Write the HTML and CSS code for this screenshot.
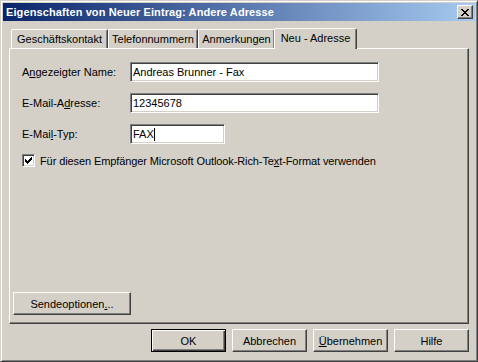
FILE: index.html
```html
<!DOCTYPE html>
<html lang="de">
<head>
    <meta charset="UTF-8">
    <link rel="stylesheet" href="styles.css">
</head>
<body>
    <div class="window">
        <div class="titlebar">
            <span class="title">Eigenschaften von Neuer Eintrag: Andere Adresse</span>
            <span class="close">
                <svg width="8" height="7" viewBox="0 0 8 7"><path d="M0 0h2v1h1v1h2v-1h1v-1h2v1h-1v1h-1v1h-1v1h1v1h1v1h1v1h-2v-1h-1v-1h-2v1h-1v1h-2v-1h1v-1h1v-1h1v-1h-1v-1h-1v-1h-1z" fill="#000"/></svg>
            </span>
        </div>

        <div class="tabs">
            <div class="tab t-business">Geschäftskontakt</div>
            <div class="tab t-phone">Telefonnummern</div>
            <div class="tab t-notes">Anmerkungen</div>
            <div class="tab active">Neu - Adresse</div>
        </div>

        <div class="panel">
            <div class="fields">
                <div class="row">
                    <label class="label">A<u>n</u>gezeigter Name:</label>
                    <div class="field wide">Andreas Brunner - Fax</div>
                </div>
                <div class="row">
                    <label class="label">E-Mail-A<u>d</u>resse:</label>
                    <div class="field wide">12345678</div>
                </div>
                <div class="row">
                    <label class="label">E-Mai<u>l</u>-Typ:</label>
                    <div class="field short">FAX<span class="caret"></span></div>
                </div>
                <div class="check-row">
                    <span class="checkbox">
                        <svg width="7" height="7" viewBox="0 0 7 7"><path d="M6 0h1v3h-1v1h-1v1h-1v1h-1v1h-1v-1h-1v-1h-1v-3h1v1h1v1h1v-1h1v-1h1v-1h1z" fill="#000"/></svg>
                    </span>
                    <span class="check-text">Für diesen Empfänger Microsoft Outlook-Rich-Te<u>x</u>t-Format verwenden</span>
                </div>
            </div>
            <button class="btn send">Sendeoptionen<u>.</u>..</button>
        </div>

        <div class="buttons">
            <button class="btn default">OK</button>
            <button class="btn">Abbrechen</button>
            <button class="btn"><u>Ü</u>bernehmen</button>
            <button class="btn">Hilfe</button>
        </div>
    </div>
</body>
</html>
```

FILE: styles.css
```css
body {
    margin: 0;
    font-family: 'Liberation Sans', Arial, sans-serif;
    font-size: 11px;
    color: #000;
    background-color: #d4d0c8;
}

.window {
    width: 478px;
    height: 362px;
    box-sizing: border-box;
    border: 1px solid;
    border-color: #d4d0c8 #404040 #404040 #d4d0c8;
    box-shadow: inset 1px 1px #fff, inset -1px -1px #808080;
    padding: 2px;
    background-color: #d4d0c8;
    display: flex;
    flex-direction: column;
}

.titlebar {
    height: 18px;
    background: linear-gradient(to right, #0a246a, #a6caf0);
    display: flex;
    align-items: center;
    justify-content: space-between;
    padding: 0 2px 0 3px;
}

.title {
    color: #fff;
    font-weight: bold;
    font-size: 11px;
    letter-spacing: 0.1px;
}

.close {
    width: 16px;
    height: 14px;
    box-sizing: border-box;
    border: 1px solid;
    border-color: #fff #404040 #404040 #fff;
    box-shadow: inset -1px -1px #808080;
    background-color: #d4d0c8;
    display: flex;
    align-items: center;
    justify-content: center;
    padding-right: 1px;
}

.close svg {
    display: block;
}

/* tab strip */
.tabs {
    display: flex;
    align-items: flex-end;
    height: 21px;
    margin-top: 6px;
    padding-left: 8px;
}

.tab {
    height: 19px;
    box-sizing: border-box;
    padding-top: 3px;
    border: 1px solid;
    border-bottom: none;
    border-color: #fff #404040 transparent #fff;
    box-shadow: inset -1px 0 #808080;
    border-radius: 2px 2px 0 0;
    white-space: nowrap;
    text-align: center;
}

.t-business {
    width: 97px;
}

.t-phone {
    width: 90px;
}

.t-notes {
    width: 77px;
}

.tab.active {
    width: 83px;
    height: 21px;
    margin-left: -1px;
    position: relative;
    z-index: 1;
    background-color: #d4d0c8;
    margin-bottom: -1px;
}

.panel {
    margin: 0 6px;
    height: 276px;
    box-sizing: border-box;
    border: 1px solid;
    border-color: #fff #404040 #404040 #fff;
    box-shadow: inset -1px -1px #808080;
    padding: 13px 12px 8px 3px;
    display: flex;
    flex-direction: column;
    justify-content: space-between;
    align-items: flex-start;
}

.fields {
    width: 100%;
    padding-left: 9px;
    box-sizing: border-box;
}

.row {
    display: flex;
    align-items: center;
    height: 20px;
    margin-bottom: 11px;
}

.row + .row + .row {
    margin-bottom: 10px;
}

.label {
    width: 108px;
}

.field {
    height: 20px;
    box-sizing: border-box;
    border: 1px solid;
    border-color: #808080 #fff #fff #808080;
    box-shadow: inset 1px 1px #404040, inset -1px -1px #d4d0c8;
    background-color: #fff;
    padding: 3px 2px 0 2px;
    white-space: nowrap;
}

.field.wide {
    width: 249px;
}

.field.short {
    width: 95px;
}

.caret {
    display: inline-block;
    width: 1px;
    height: 13px;
    background-color: #000;
    vertical-align: -3px;
}

.check-row {
    display: flex;
    align-items: center;
    gap: 5px;
    height: 13px;
}

.check-text {
    letter-spacing: -0.1px;
}

.checkbox {
    width: 13px;
    height: 13px;
    box-sizing: border-box;
    border: 1px solid;
    border-color: #808080 #fff #fff #808080;
    box-shadow: inset 1px 1px #404040, inset -1px -1px #d4d0c8;
    background-color: #fff;
    display: flex;
    align-items: center;
    justify-content: center;
}

.checkbox svg {
    display: block;
}

.btn {
    font-family: 'Liberation Sans', Arial, sans-serif;
    font-size: 11px;
    color: #000;
    background-color: #d4d0c8;
    width: 75px;
    height: 23px;
    box-sizing: border-box;
    border: 1px solid;
    border-color: #fff #404040 #404040 #fff;
    box-shadow: inset -1px -1px #808080;
    padding: 0;
    margin: 0;
}

.btn.send {
    width: 118px;
}

.btn.default {
    border: 1px solid #000;
    box-shadow: inset 1px 1px #fff, inset -1px -1px #404040, inset -2px -2px #808080;
}

.buttons {
    display: flex;
    justify-content: flex-end;
    gap: 6px;
    margin-top: 5px;
    padding-right: 6px;
}
```
